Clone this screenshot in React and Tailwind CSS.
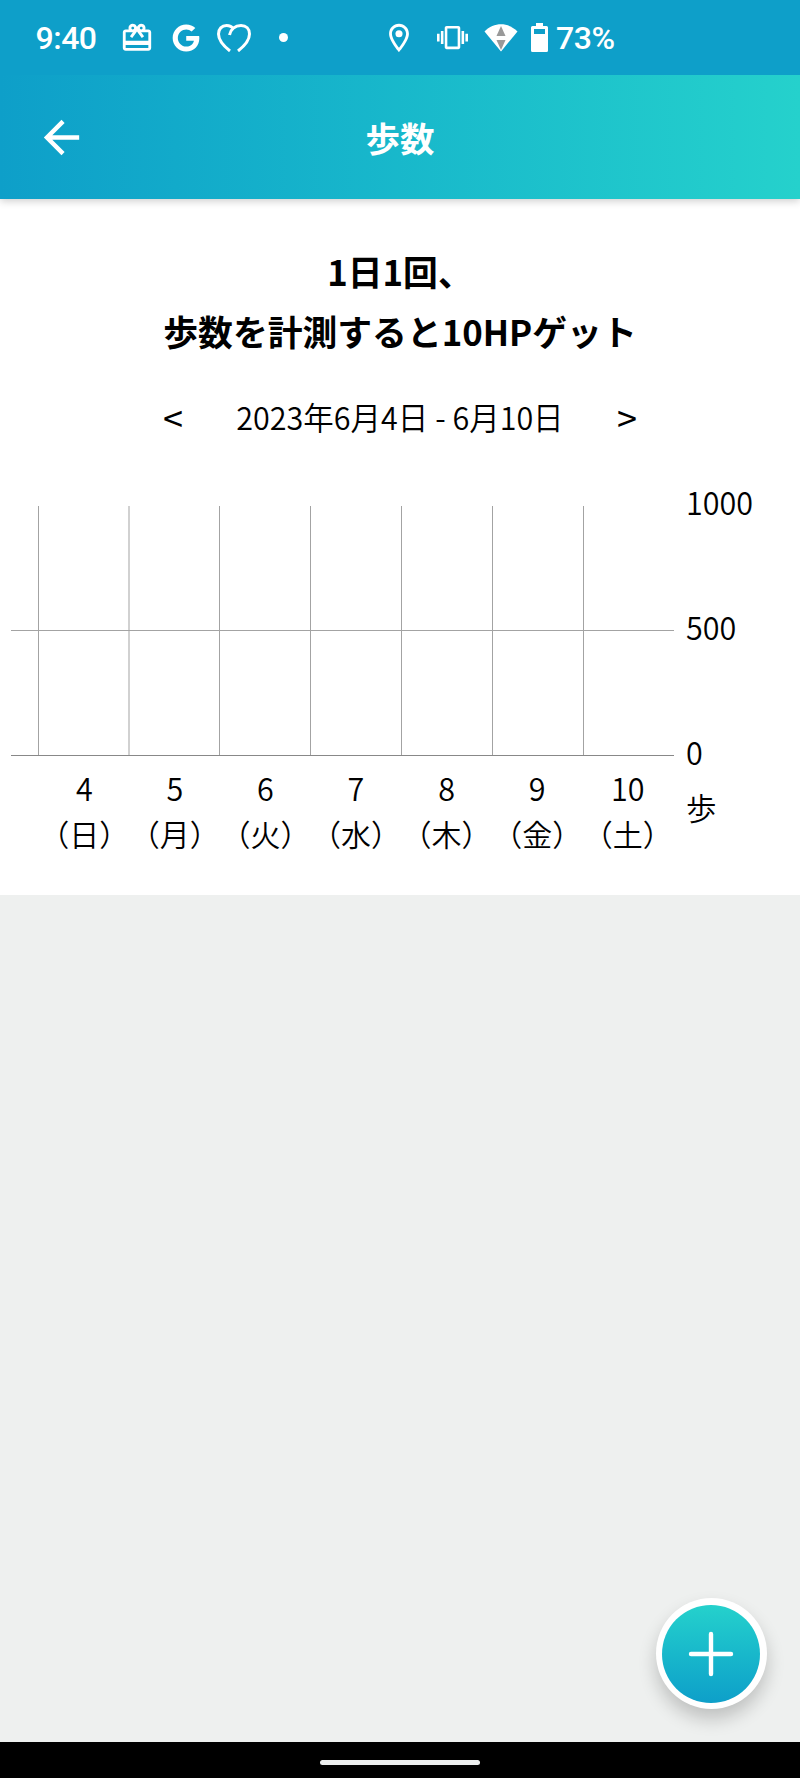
import React from 'react';
import { FaGoogle } from 'react-icons/fa';
import { MdArrowBack, MdOutlineLocationOn, MdRedeem, MdVibration } from 'react-icons/md';

const days = [
  { date: 4, label: '日' },
  { date: 5, label: '月' },
  { date: 6, label: '火' },
  { date: 7, label: '水' },
  { date: 8, label: '木' },
  { date: 9, label: '金' },
  { date: 10, label: '土' },
];

const gridLines = [27.5, 118, 208.5, 299.5, 390.5, 481.5, 572.5];

const HeartIcon = () => (
  <svg className="w-[34px] h-[28px]" viewBox="0 0 34 28" fill="none" stroke="currentColor" strokeWidth="3">
    <path d="M13 27C6 21.500 1.500 16 1.500 10C1.500 5 4.800 1.500 9.500 1.500C12.500 1.500 15 2.800 16.500 5" />
    <path d="M12.500 11C13.500 5.500 18 1.500 24 1.500C29.200 1.500 32.500 5 32.500 10C32.500 16 28 21.500 21 27" />
  </svg>
);

const SignalIcon = () => (
  <svg className="w-[34px] h-[28px]" viewBox="0 0 34 28">
    <path d="M0.500 7.500C10 -2.200 24 -2.200 33.500 7.500L17 27.500Z" fill="white" />
    <path d="M17 2L21.500 12H12.500Z" fill="#999" />
    <path d="M12.500 16H21.500L17 26Z" fill="#999" />
  </svg>
);

const BatteryIcon = () => (
  <svg className="w-[17px] h-[29px]" viewBox="0 0 17 29" fill="white" fillRule="evenodd">
    <path d="M5 0H12V3H15.500Q17 3 17 4.500V27.500Q17 29 15.500 29H1.500Q0 29 0 27.500V4.500Q0 3 1.500 3H5ZM3 6V11H14V6Z" />
  </svg>
);

const StatusBar = () => (
  <div className="relative z-20 h-[75px] shrink-0 flex items-center bg-[#0e9fc9] pl-[35.500px] font-[Roboto,sans-serif] text-[32px] font-medium">
    <span className="w-[84.500px] tracking-[-0.5px] pt-px">9:40</span>
    <MdRedeem className="w-[34px] h-[34px] shrink-0" />
    <FaGoogle className="w-[28px] h-[28px] ml-[17.500px] shrink-0" />
    <div className="ml-[17.500px]"><HeartIcon /></div>
    <div className="w-[9px] h-[9px] rounded-full bg-white ml-[28px]" />
    <MdOutlineLocationOn className="w-[34px] h-[34px] ml-[94px] shrink-0" />
    <MdVibration className="w-[31px] h-[31px] ml-[21px] shrink-0" />
    <div className="ml-[16px]"><SignalIcon /></div>
    <div className="ml-[13px]"><BatteryIcon /></div>
    <span className="ml-[8px] tracking-[-0.5px] pt-px">73%</span>
  </div>
);

const Header = () => (
  <header className="h-[124px] shrink-0 grid grid-cols-3 items-center bg-linear-to-r from-[#0e9fc9] to-[#25d1cc] shadow-[0_2px_8px_rgba(0,0,0,0.2)] z-10">
    <button className="pl-[35px]"><MdArrowBack className="w-[53px] h-[53px]" /></button>
    <h1 className="text-center text-[34.500px] font-bold pt-0.5">歩数</h1>
  </header>
);

const StepChart = () => (
  <div className="flex pl-[11px] mt-[46px] text-[30.500px] leading-[45px] font-[350]">
    <div className="w-[663px]">
      <svg className="mt-[20px] w-[663px] h-[250px] block" viewBox="0 0 663 250" stroke="#a3a3a3" fill="none">
        {gridLines.map((x) => (
          <line key={x} x1={x} y1="0" x2={x} y2="249" />
        ))}
        <line x1="0" y1="124.500" x2="663" y2="124.500" />
        <line x1="0" y1="249.500" x2="663" y2="249.500" stroke="#888" />
      </svg>
      <div className="grid grid-cols-7 pl-[28px] pr-px mt-[9px] text-center">
        {days.map((day) => (
          <div key={day.date} className="whitespace-nowrap">
            <div className="scale-y-106">{day.date}</div>
            <div className="text-[30px] pt-px">（{day.label}）</div>
          </div>
        ))}
      </div>
    </div>
    <div className="pl-3">
      <div className="h-[295px] -mt-[7px] flex flex-col justify-between">
        <span className="scale-y-106">1000</span>
        <span className="scale-y-106">500</span>
        <span className="scale-y-106">0</span>
      </div>
      <div className="mt-[11px]">歩</div>
    </div>
  </div>
);

export default function App() {
  return (
    <div className="relative w-[800px] h-[1778px] flex flex-col overflow-hidden bg-[#eef0ef] font-['Noto_Sans_CJK_JP',sans-serif] text-white">
      <StatusBar />
      <Header />

      <main className="h-[696px] shrink-0 bg-white text-black pt-[42px]">
        <h2 className="text-center text-[34.800px] leading-[60px] font-bold">
          1日1回、
          <br />
          歩数を計測すると10HPゲット
        </h2>
        <div className="flex justify-between items-center mt-[34px] px-[163px] h-[45px] text-[30.500px] font-[350]">
          <button className="text-[36px] font-normal pb-[3px]">&lt;</button>
          <span className="scale-y-104">2023年6月4日 - 6月10日</span>
          <button className="text-[36px] font-normal pb-[3px]">&gt;</button>
        </div>
        <StepChart />
      </main>

      <div className="grow" />

      <button className="absolute right-[33.500px] bottom-[69px] w-[111px] h-[111px] rounded-full bg-white p-[6.500px] shadow-[0_10px_18px_rgba(0,0,0,0.2)]">
        <span className="flex w-full h-full items-center justify-center rounded-full bg-linear-to-b from-[#25d1cc] to-[#0e9fc9]">
          <svg className="w-[46px] h-[46px]" viewBox="0 0 46 46" stroke="white" strokeWidth="4.4" strokeLinecap="round">
            <path d="M23 3V43M3 23H43" />
          </svg>
        </span>
      </button>

      <footer className="h-[36px] shrink-0 flex items-center justify-center bg-black">
        <div className="w-[160px] h-[5px] rounded-full bg-[#edefef] mt-1" />
      </footer>
    </div>
  );
}
